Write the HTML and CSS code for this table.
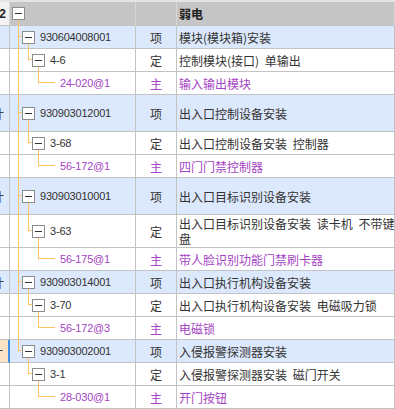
FILE: index.html
```html
<!DOCTYPE html>
<html lang="zh">
<head>
<meta charset="utf-8">
<title>弱电</title>
<link rel="stylesheet" href="styles.css">
</head>
<body>
<div class="grid">
  <div class="top"></div>

  <div class="row head">
    <div class="cell c1"><span class="num">2</span></div>
    <div class="cell c2 t root"><span class="tog l0"></span></div>
    <div class="cell c3"></div>
    <div class="cell c4"><b>弱电</b></div>
  </div>

  <div class="row item">
    <div class="cell c1"></div>
    <div class="cell c2 t n1"><span class="tog l1"></span><span class="code">930604008001</span></div>
    <div class="cell c3">项</div>
    <div class="cell c4">模块(模块箱)安装</div>
  </div>
  <div class="row">
    <div class="cell c1"></div>
    <div class="cell c2 t n2"><span class="tog l2"></span><span class="code">4-6</span></div>
    <div class="cell c3">定</div>
    <div class="cell c4">控制模块(接口) 单输出</div>
  </div>
  <div class="row main">
    <div class="cell c1"></div>
    <div class="cell c2 t n3"><span class="code">24-020@1</span></div>
    <div class="cell c3">主</div>
    <div class="cell c4">输入输出模块</div>
  </div>

  <div class="row item tall">
    <div class="cell c1"><span class="frag">计</span></div>
    <div class="cell c2 t n1"><span class="tog l1"></span><span class="code">930903012001</span></div>
    <div class="cell c3">项</div>
    <div class="cell c4">出入口控制设备安装</div>
  </div>
  <div class="row">
    <div class="cell c1"></div>
    <div class="cell c2 t n2"><span class="tog l2"></span><span class="code">3-68</span></div>
    <div class="cell c3">定</div>
    <div class="cell c4">出入口控制设备安装 控制器</div>
  </div>
  <div class="row main">
    <div class="cell c1"></div>
    <div class="cell c2 t n3"><span class="code">56-172@1</span></div>
    <div class="cell c3">主</div>
    <div class="cell c4">四门门禁控制器</div>
  </div>

  <div class="row item tall">
    <div class="cell c1"><span class="frag">计</span></div>
    <div class="cell c2 t n1"><span class="tog l1"></span><span class="code">930903010001</span></div>
    <div class="cell c3">项</div>
    <div class="cell c4">出入口目标识别设备安装</div>
  </div>
  <div class="row two">
    <div class="cell c1"></div>
    <div class="cell c2 t n2"><span class="tog l2"></span><span class="code">3-63</span></div>
    <div class="cell c3">定</div>
    <div class="cell c4 wrap"><span class="ln">出入口目标识别设备安装 读卡机 不带键</span><span class="ln">盘</span></div>
  </div>
  <div class="row main">
    <div class="cell c1"></div>
    <div class="cell c2 t n3"><span class="code">56-175@1</span></div>
    <div class="cell c3">主</div>
    <div class="cell c4">带人脸识别功能门禁刷卡器</div>
  </div>

  <div class="row item">
    <div class="cell c1"><span class="frag">计</span></div>
    <div class="cell c2 t n1"><span class="tog l1"></span><span class="code">930903014001</span></div>
    <div class="cell c3">项</div>
    <div class="cell c4">出入口执行机构设备安装</div>
  </div>
  <div class="row">
    <div class="cell c1"></div>
    <div class="cell c2 t n2"><span class="tog l2"></span><span class="code">3-70</span></div>
    <div class="cell c3">定</div>
    <div class="cell c4">出入口执行机构设备安装 电磁吸力锁</div>
  </div>
  <div class="row main">
    <div class="cell c1"></div>
    <div class="cell c2 t n3"><span class="code">56-172@3</span></div>
    <div class="cell c3">主</div>
    <div class="cell c4">电磁锁</div>
  </div>

  <div class="row item selected">
    <div class="cell c1"><span class="frag">计</span></div>
    <div class="cell c2 t n1 last"><span class="tog l1"></span><span class="code">930903002001</span></div>
    <div class="cell c3">项</div>
    <div class="cell c4">入侵报警探测器安装</div>
  </div>
  <div class="row">
    <div class="cell c1"></div>
    <div class="cell c2 t n2 last"><span class="tog l2"></span><span class="code">3-1</span></div>
    <div class="cell c3">定</div>
    <div class="cell c4">入侵报警探测器安装 磁门开关</div>
  </div>
  <div class="row main">
    <div class="cell c1"></div>
    <div class="cell c2 t n3 last"><span class="code">28-030@1</span></div>
    <div class="cell c3">主</div>
    <div class="cell c4">开门按钮</div>
  </div>
</div>
</body>
</html>
```

FILE: styles.css
```css
html, body {
  margin: 0;
  padding: 0;
  background: #ffffff;
  overflow: hidden;
}

body {
  font-family: "Liberation Sans", "Noto Sans CJK SC", sans-serif;
  font-size: 12px;
  color: #333333;
}

.grid {
  --o: linear-gradient(#ffc468, #ffc468);
  --g: linear-gradient(#c3c3c3, #c3c3c3);
  --cy: calc(50% - 1px);
  margin-left: -31px;
  width: 426px;
}

.top {
  height: 2px;
  background: #e4e4e4;
}

.row {
  display: grid;
  grid-template-columns: 41px 126px 41px 218px;
  height: 23px;
}

.row.tall { height: 37px; }
.row.two { height: 33px; }

.row.head {
  height: 24px;
  background: #c6c6c6;
}

.row.item { background: #dce8fb; }

.cell {
  box-sizing: border-box;
  border-right: 1px solid #c3c3c3;
  border-bottom: 1px solid #c3c3c3;
  display: flex;
  align-items: center;
  overflow: hidden;
  white-space: nowrap;
}

.head .cell {
  border-right-color: #d6d6d6;
  border-bottom-color: #c3c3c3;
}

.c1 {
  justify-content: flex-end;
  padding-right: 3px;
}

.head .c1 { background: #f2f2f2; }

.num {
  font-weight: bold;
  color: #222;
  font-size: 12px;
}

.frag {
  margin-right: 2px;
  color: #444;
  font-family: "Noto Sans CJK SC", sans-serif;
}

.selected .c1 {
  background: #fde3c6;
  border-right: 2px solid #3d8fe8;
}

.c3 {
  justify-content: center;
  font-family: "Noto Sans CJK SC", sans-serif;
}

.c4 {
  padding-left: 2px;
  font-family: "Noto Sans CJK SC", sans-serif;
  word-spacing: 3px;
}

.c4 b {
  font-weight: bold;
  color: #222;
  word-spacing: 0;
}

.c4.wrap {
  flex-direction: column;
  align-items: flex-start;
  justify-content: center;
}

.ln {
  display: block;
  height: 15px;
  line-height: 15px;
}

.main .c3,
.main .c4,
.main .code {
  color: #a444c4;
}

.code {
  font-size: 11px;
  letter-spacing: -0.2px;
  margin-left: 5px;
}

/* tree column: connector lines drawn as background layers */
.t {
  border-bottom: 0;
  padding-bottom: 1px;
  background-repeat: no-repeat;
}

.t.root {
  background:
    var(--o) 8px 100% / 1px 50% no-repeat,
    var(--g) 0 100% / 100% 1px no-repeat;
}

.t.n1 {
  background:
    var(--o) 8px 0 / 1px 100% no-repeat,
    var(--o) 8px var(--cy) / 5px 1px no-repeat,
    var(--o) 18px 100% / 1px 50% no-repeat,
    var(--g) 0 100% / 100% 1px no-repeat;
}

.t.n1.last {
  background:
    var(--o) 8px 0 / 1px 50% no-repeat,
    var(--o) 8px var(--cy) / 5px 1px no-repeat,
    var(--o) 18px 100% / 1px 50% no-repeat,
    var(--g) 0 100% / 100% 1px no-repeat;
}

.t.n2 {
  background:
    var(--o) 8px 0 / 1px 100% no-repeat,
    var(--o) 18px 0 / 1px 50% no-repeat,
    var(--o) 18px var(--cy) / 5px 1px no-repeat,
    var(--o) 28px 100% / 1px 50% no-repeat,
    var(--g) 0 100% / 100% 1px no-repeat;
}

.t.n2.last {
  background:
    var(--o) 18px 0 / 1px 50% no-repeat,
    var(--o) 18px var(--cy) / 5px 1px no-repeat,
    var(--o) 28px 100% / 1px 50% no-repeat,
    var(--g) 0 100% / 100% 1px no-repeat;
}

.t.n3 {
  padding-left: 45px;
  background:
    var(--o) 8px 0 / 1px 100% no-repeat,
    var(--o) 28px 0 / 1px 50% no-repeat,
    var(--o) 28px var(--cy) / 17px 1px no-repeat,
    var(--g) 0 100% / 100% 1px no-repeat;
}

.t.n3.last {
  background:
    var(--o) 28px 0 / 1px 50% no-repeat,
    var(--o) 28px var(--cy) / 17px 1px no-repeat,
    var(--g) 0 100% / 100% 1px no-repeat;
}

.tog {
  box-sizing: border-box;
  flex: none;
  width: 13px;
  height: 13px;
  border: 1px solid #8c8c8c;
  background: #ffffff;
  display: flex;
  align-items: center;
  justify-content: center;
}

.tog::before {
  content: "";
  width: 7px;
  height: 1px;
  background: #333333;
}

.tog.l0 { margin-left: 2px; }
.tog.l1 { margin-left: 12px; }
.tog.l2 { margin-left: 22px; }
```
